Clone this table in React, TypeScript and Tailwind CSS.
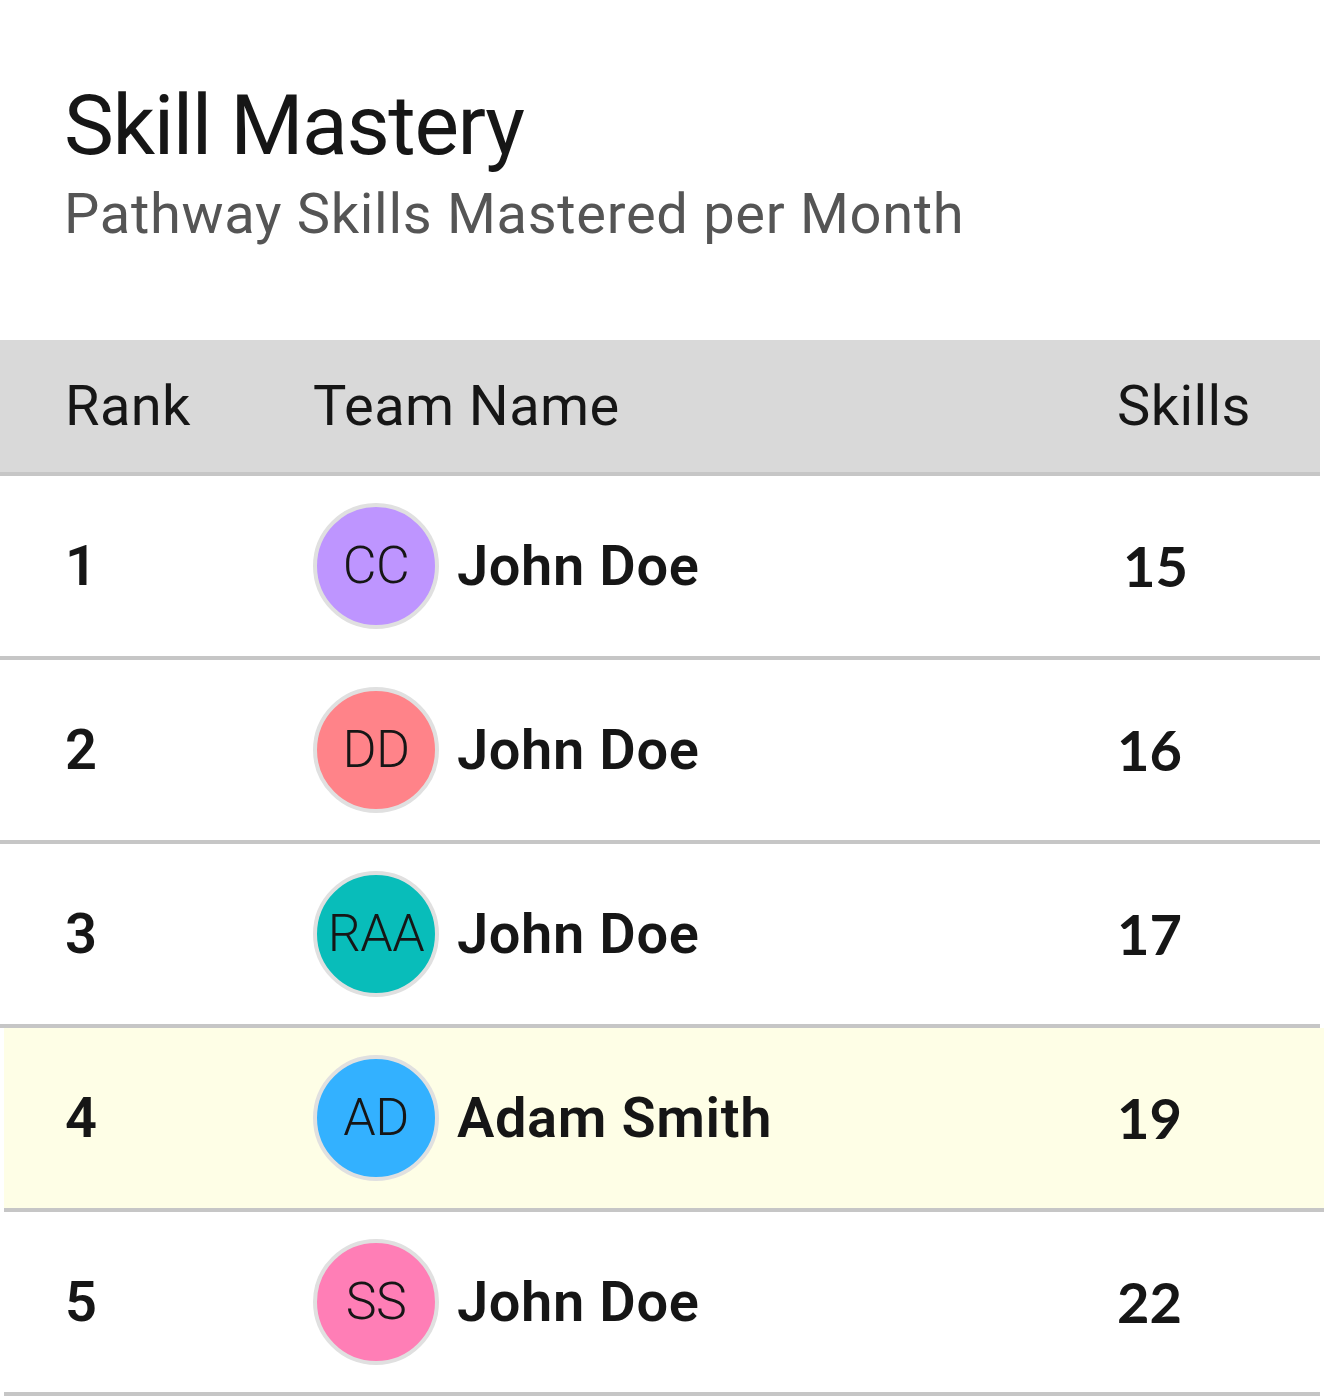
const rows = [
  { rank: 1, initials: "CC", color: "bg-[#be95ff]", name: "John Doe", skills: "15", nudge: true },
  { rank: 2, initials: "DD", color: "bg-[#ff8389]", name: "John Doe", skills: "16" },
  { rank: 3, initials: "RAA", color: "bg-[#08bdba]", name: "John Doe", skills: "17" },
  { rank: 4, initials: "AD", color: "bg-[#33b1ff]", name: "Adam Smith", skills: "19", me: true },
  { rank: 5, initials: "SS", color: "bg-[#ff7eb6]", name: "John Doe", skills: "22", last: true },
];

export default function App() {
  return (
    <div className="w-[1324px] min-h-[1396px] bg-white text-[#161616] font-['Roboto',sans-serif]">
      <div className="pl-[64px] pt-[78px] pb-[86px]">
        <h1 className="text-[84px] leading-[96px] font-normal tracking-[-1.4px]">Skill Mastery</h1>
        <p className="text-[56px] leading-[80px] text-[#555555] tracking-[0.7px]">Pathway Skills Mastered per Month</p>
      </div>

      <div className="w-[1320px] h-[136px] flex items-center bg-[#d9d9d9] border-b-4 border-[#c6c6c6] text-[56px] tracking-[0.4px]">
        <div className="w-[313px] pl-[65px]">Rank</div>
        <div className="w-[804px]">Team Name</div>
        <div>Skills</div>
      </div>

      {rows.map((r) => {
        const shifted = r.me || r.last;
        return (
          <div
            key={r.rank}
            className={`h-[184px] flex items-center border-b-4 border-[#c6c6c6] ${
              r.me ? "ml-[4px] w-[1320px] bg-[#fefee6]" : r.last ? "ml-[4px] w-[1316px]" : "w-[1320px]"
            }`}
          >
            <div className={`${shifted ? "w-[309px] pl-[61px]" : "w-[313px] pl-[65px]"} text-[56px] font-semibold`}>
              {r.rank}
            </div>
            <div className="w-[804px] flex items-center gap-[18px]">
              <div
                className={`w-[126px] h-[126px] shrink-0 rounded-full border-4 border-[#e0e0e0] ${r.color} flex items-center justify-center text-[52px] font-light tracking-[-0.5px] overflow-hidden`}
              >
                {r.initials}
              </div>
              <div className="text-[56px] font-semibold tracking-[0.6px]">{r.name}</div>
            </div>
            <div className={`font-['Lato',sans-serif] font-bold text-[56px] ${r.nudge ? "pl-[6px]" : ""}`}>
              {r.skills}
            </div>
          </div>
        );
      })}
    </div>
  );
}
